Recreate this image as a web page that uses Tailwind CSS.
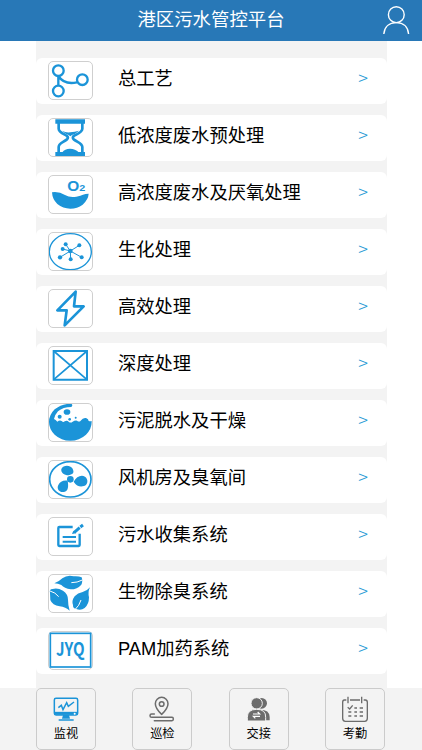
<!DOCTYPE html>
<html lang="zh-CN">
<head>
    <meta charset="UTF-8">
    <meta name="viewport" content="width=device-width, initial-scale=1.0">
    <title>港区污水管控平台</title>
    <script src="https://cdn.jsdelivr.net/npm/@tailwindcss/browser@4"></script>
</head>
<body class="bg-white text-black font-['Liberation_Sans','Noto_Sans_CJK_SC',sans-serif]">
    <div class="flex flex-col h-[750px] overflow-hidden">
        <!-- Header -->
        <header class="h-[41px] shrink-0 bg-[#2878b7] flex items-center">
            <div class="w-[41px]"></div>
            <h1 class="flex-1 text-center text-[18.4px] leading-[26px] text-white pb-px">港区污水管控平台</h1>
            <svg class="w-[41px] h-[41px]" viewBox="381 0 41 41" fill="none" stroke="#fff" stroke-width="1.4">
                <circle cx="396.3" cy="14.7" r="7.9"/>
                <path d="M383.8 34 C384.5 26.5 389.5 22.6 396.3 22.6 S408 26.5 408.6 34"/>
            </svg>
        </header>

        <!-- Menu list -->
        <main class="ml-9 w-[351px] h-[647px] shrink-0 bg-[#f3f3f3] pt-[17px] flex flex-col gap-[11px]">
            <a class="h-[46px] shrink-0 bg-white rounded-md flex items-start pl-3 pt-[3px]">
                <span class="w-[45px] h-[39px] border border-[#cfcfcf] rounded-[5px]">
                    <svg class="w-[43px] h-[37px]" viewBox="3 3 129 111" fill="none" stroke="#1b94d8" stroke-width="7">
                        <circle cx="31" cy="29" r="16"/><circle cx="31" cy="90" r="16"/><circle cx="103" cy="56" r="16"/>
                        <path d="M31 45V74M31 45C42 62 60 70 87 64"/>
                    </svg>
                </span>
                <span class="ml-[25px] text-[18.3px] leading-[26px] mt-[5px]">总工艺</span>
                <span class="ml-auto mr-[19px] mt-[3px] font-['Noto_Sans_CJK_SC',sans-serif] font-light text-[18px] leading-[26px] text-[#2a9bd5]">&gt;</span>
            </a>
            <a class="h-[46px] shrink-0 bg-white rounded-md flex items-start pl-3 pt-[3px]">
                <span class="w-[45px] h-[39px] border border-[#cfcfcf] rounded-[5px]">
                    <svg class="w-[43px] h-[37px]" viewBox="3 3 129 111" fill="#1b94d8">
                        <path d="M22 4H111V17H22ZM22 102H111V115H22Z"/>
                        <path d="M32 15V32C32 42 44 46 57 54Q62 59 57 64C44 74 32 76 32 87V104M103 15V32C103 42 91 46 77 54Q72 59 77 64C91 74 103 76 103 87V104" fill="none" stroke="#1b94d8" stroke-width="8"/>
                        <path d="M42 38Q54 45 67 43T93 38Q81 49 72 51L67 55L62 51Q53 48 42 38ZM43 103Q50 92 66 92T92 103Z"/>
                    </svg>
                </span>
                <span class="ml-[25px] text-[18.3px] leading-[26px] mt-[5px]">低浓度废水预处理</span>
                <span class="ml-auto mr-[19px] mt-[3px] font-['Noto_Sans_CJK_SC',sans-serif] font-light text-[18px] leading-[26px] text-[#2a9bd5]">&gt;</span>
            </a>
            <a class="h-[46px] shrink-0 bg-white rounded-md flex items-start pl-3 pt-[3px]">
                <span class="w-[45px] h-[39px] border border-[#cfcfcf] rounded-[5px]">
                    <svg class="w-[43px] h-[37px]" viewBox="3 3 129 111" fill="#1b94d8">
                        <path d="M12 52Q33 49 51 60Q66 69 85 65Q99 62 105 59Q112 56 122 56Q121 73 104 89Q88 101 67 101Q45 101 28 87Q13 73 12 52Z"/>
                        <text x="58" y="47" font-size="42" font-weight="bold" font-family="Liberation Sans" textLength="36" lengthAdjust="spacingAndGlyphs">O</text>
                        <text x="94" y="47" font-size="25" font-weight="bold" font-family="Liberation Sans" textLength="18" lengthAdjust="spacingAndGlyphs">2</text>
                    </svg>
                </span>
                <span class="ml-[25px] text-[18.3px] leading-[26px] mt-[5px]">高浓度废水及厌氧处理</span>
                <span class="ml-auto mr-[19px] mt-[3px] font-['Noto_Sans_CJK_SC',sans-serif] font-light text-[18px] leading-[26px] text-[#2a9bd5]">&gt;</span>
            </a>
            <a class="h-[46px] shrink-0 bg-white rounded-md flex items-start pl-3 pt-[3px]">
                <span class="w-[45px] h-[39px] border border-[#cfcfcf] rounded-[5px]">
                    <svg class="w-[43px] h-[37px]" viewBox="3 3 129 111" fill="#1b94d8">
                        <ellipse cx="67" cy="59" rx="63" ry="54" fill="none" stroke="#1b94d8" stroke-width="4"/>
                        <path d="M67 57L53 37M67 57L94 40M67 57L44 51M67 57L36 76M67 57L68 82M67 57L101 76" stroke="#1b94d8" stroke-width="3"/>
                        <circle cx="67" cy="57" r="7"/><circle cx="53" cy="37" r="6"/><circle cx="94" cy="40" r="6"/><circle cx="44" cy="51" r="6"/><circle cx="36" cy="76" r="6.500"/><circle cx="68" cy="82" r="6"/><circle cx="101" cy="76" r="6"/>
                    </svg>
                </span>
                <span class="ml-[25px] text-[18.3px] leading-[26px] mt-[5px]">生化处理</span>
                <span class="ml-auto mr-[19px] mt-[3px] font-['Noto_Sans_CJK_SC',sans-serif] font-light text-[18px] leading-[26px] text-[#2a9bd5]">&gt;</span>
            </a>
            <a class="h-[46px] shrink-0 bg-white rounded-md flex items-start pl-3 pt-[3px]">
                <span class="w-[45px] h-[39px] border border-[#cfcfcf] rounded-[5px]">
                    <svg class="w-[43px] h-[37px]" viewBox="3 3 129 111" fill="none" stroke="#1b94d8" stroke-width="8" stroke-linejoin="round">
                        <path d="M83 8L28 64H56L50 109L107 52H78Z"/>
                    </svg>
                </span>
                <span class="ml-[25px] text-[18.3px] leading-[26px] mt-[5px]">高效处理</span>
                <span class="ml-auto mr-[19px] mt-[3px] font-['Noto_Sans_CJK_SC',sans-serif] font-light text-[18px] leading-[26px] text-[#2a9bd5]">&gt;</span>
            </a>
            <a class="h-[46px] shrink-0 bg-white rounded-md flex items-start pl-3 pt-[3px]">
                <span class="w-[45px] h-[39px] border border-[#cfcfcf] rounded-[5px]">
                    <svg class="w-[43px] h-[37px]" viewBox="3 3 129 111" fill="none" stroke="#1b94d8">
                        <path d="M17 15H117V101H17Z" stroke-width="6"/>
                        <path d="M17 15L117 101M117 15L17 101" stroke-width="5"/>
                    </svg>
                </span>
                <span class="ml-[25px] text-[18.3px] leading-[26px] mt-[5px]">深度处理</span>
                <span class="ml-auto mr-[19px] mt-[3px] font-['Noto_Sans_CJK_SC',sans-serif] font-light text-[18px] leading-[26px] text-[#2a9bd5]">&gt;</span>
            </a>
            <a class="h-[46px] shrink-0 bg-white rounded-md flex items-start pl-3 pt-[3px]">
                <span class="w-[45px] h-[39px] border border-[#cfcfcf] rounded-[5px]">
                    <svg class="w-[43px] h-[37px]" viewBox="3 3 129 111" fill="#1b94d8">
                        <path d="M70 2Q76 7 70 12Q45 12 30 25Q20 36 18 48Q23 50 28 56Q35 50 41 54Q46 60 50 55Q57 51 62 56Q68 61 74 56Q80 52 87 53Q94 58 98 53Q105 43 114 45Q122 48 122 54Q128 56 131 54Q132 78 114 95Q94 113 67 113Q40 113 20 95Q3 78 3 57Q3 36 20 19Q42 2 70 2Z"/>
                        <ellipse cx="57" cy="27" rx="10" ry="8.500"/><circle cx="35" cy="41" r="6"/><circle cx="65" cy="49" r="4"/><circle cx="83" cy="44" r="3"/>
                    </svg>
                </span>
                <span class="ml-[25px] text-[18.3px] leading-[26px] mt-[5px]">污泥脱水及干燥</span>
                <span class="ml-auto mr-[19px] mt-[3px] font-['Noto_Sans_CJK_SC',sans-serif] font-light text-[18px] leading-[26px] text-[#2a9bd5]">&gt;</span>
            </a>
            <a class="h-[46px] shrink-0 bg-white rounded-md flex items-start pl-3 pt-[3px]">
                <span class="w-[45px] h-[39px] border border-[#cfcfcf] rounded-[5px]">
                    <svg class="w-[43px] h-[37px]" viewBox="3 3 129 111" fill="#1b94d8">
                        <ellipse cx="67" cy="58" rx="62" ry="53" fill="none" stroke="#1b94d8" stroke-width="5"/>
                        <circle cx="67" cy="58" r="10"/>
                        <path d="M62 46C48 46 38 38 40 27C46 14 66 14 73 25C80 37 76 43 62 46ZM59 62C62 80 61 93 48 96C34 98 25 87 31 75C36 65 45 60 59 62ZM77 65C85 51 99 43 111 50C122 58 120 74 108 78C96 82 86 78 77 65Z"/>
                    </svg>
                </span>
                <span class="ml-[25px] text-[18.3px] leading-[26px] mt-[5px]">风机房及臭氧间</span>
                <span class="ml-auto mr-[19px] mt-[3px] font-['Noto_Sans_CJK_SC',sans-serif] font-light text-[18px] leading-[26px] text-[#2a9bd5]">&gt;</span>
            </a>
            <a class="h-[46px] shrink-0 bg-white rounded-md flex items-start pl-3 pt-[3px]">
                <span class="w-[45px] h-[39px] border border-[#cfcfcf] rounded-[5px]">
                    <svg class="w-[43px] h-[37px]" viewBox="3 3 129 111" fill="none" stroke="#1b94d8" stroke-width="7" stroke-linejoin="round">
                        <path d="M74 30H34Q31 30 31 33V84Q31 87 34 87H92Q95 87 95 84V50"/>
                        <path d="M44 60H84M44 74H84" stroke-width="6"/>
                        <path d="M79 46L95 32M97 30L105 24" stroke-width="9"/>
                        <path d="M72 51L76 41L84 49Z" fill="#1b94d8" stroke="none"/>
                    </svg>
                </span>
                <span class="ml-[25px] text-[18.3px] leading-[26px] mt-[5px]">污水收集系统</span>
                <span class="ml-auto mr-[19px] mt-[3px] font-['Noto_Sans_CJK_SC',sans-serif] font-light text-[18px] leading-[26px] text-[#2a9bd5]">&gt;</span>
            </a>
            <a class="h-[46px] shrink-0 bg-white rounded-md flex items-start pl-3 pt-[3px]">
                <span class="w-[45px] h-[39px] border border-[#cfcfcf] rounded-[5px]">
                    <svg class="w-[43px] h-[37px]" viewBox="3 3 129 111" fill="#1b94d8">
                        <path d="M19 28Q34 22 43 13Q58 2 77 7Q92 6 101 10Q105 22 100 32Q88 46 68 46Q49 43 40 33Q30 29 19 28Z"/>
                        <path d="M6 56Q3 46 14 45Q29 41 45 50Q60 60 60 77Q60 94 65 110Q53 99 35 97Q13 94 7 78Z"/>
                        <path d="M126 40Q119 54 123 70Q123 91 110 102Q99 110 85 105Q74 104 75 93Q70 81 80 67Q89 57 104 54Q118 50 126 40Z"/>
                        <path d="M103 18Q88 26 70 26M6 51Q22 55 32 68M81 107Q94 95 99 78" fill="none" stroke="#fff" stroke-width="3"/>
                    </svg>
                </span>
                <span class="ml-[25px] text-[18.3px] leading-[26px] mt-[5px]">生物除臭系统</span>
                <span class="ml-auto mr-[19px] mt-[3px] font-['Noto_Sans_CJK_SC',sans-serif] font-light text-[18px] leading-[26px] text-[#2a9bd5]">&gt;</span>
            </a>
            <a class="h-[46px] shrink-0 bg-white rounded-md flex items-start pl-3 pt-[3px]">
                <span class="w-[45px] h-[39px] border border-[#cfcfcf] rounded-[5px]">
                    <svg class="w-[43px] h-[37px]" viewBox="3 3 129 111" fill="#1b94d8">
                        <rect x="7" y="7" width="121" height="101" fill="none" stroke="#1b94d8" stroke-width="5"/>
                        <text x="24" y="74" font-size="56" font-weight="bold" font-family="Noto Sans CJK SC" textLength="86" lengthAdjust="spacingAndGlyphs">JYQ</text>
                    </svg>
                </span>
                <span class="ml-[25px] text-[18.3px] leading-[26px] mt-[5px]">PAM加药系统</span>
                <span class="ml-auto mr-[19px] mt-[3px] font-['Noto_Sans_CJK_SC',sans-serif] font-light text-[18px] leading-[26px] text-[#2a9bd5]">&gt;</span>
            </a>
        </main>

        <!-- Bottom tabs -->
        <nav class="h-[62px] shrink-0 bg-[#f3f3f3] flex justify-between pl-9 pr-[37px]">
            <a class="w-[60px] h-[62px] border border-[#cbcbcb] rounded-[5px] flex flex-col items-center">
                <svg class="w-[58px] h-[34px]" viewBox="111 60 174 102" fill="none" stroke="#1b94d8" stroke-width="4.500">
                    <rect x="163" y="88" width="70" height="50" rx="5"/>
                    <path d="M163 133H233" stroke-width="9"/>
                    <path d="M175 116L184 109L189 122L200 101L205 112L222 99"/>
                    <path d="M189 138L186 149H210L207 138Z" fill="#1b94d8" stroke="none"/>
                    <path d="M176 153H221"/>
                    <circle cx="224" cy="134" r="3" fill="#fff" stroke="none"/>
                </svg>
                <span class="text-[12.2px] leading-[18px] mt-[2px]">监视</span>
            </a>
            <a class="w-[60px] h-[62px] border border-[#cbcbcb] rounded-[5px] flex flex-col items-center">
                <svg class="w-[58px] h-[34px]" viewBox="402 60 174 102" fill="none" stroke="#6c6c6c" stroke-width="4.500" stroke-linecap="round">
                    <path d="M488 136Q469 118 469 104A19 19 0 0 1 507 104Q507 118 488 136Z"/>
                    <circle cx="488" cy="105" r="7"/>
                    <path d="M466 135H458Q453 135 453 140T458 145H519Q523 145 523 150T519 155H466"/>
                </svg>
                <span class="text-[12.2px] leading-[18px] mt-[2px]">巡检</span>
            </a>
            <a class="w-[60px] h-[62px] border border-[#cbcbcb] rounded-[5px] flex flex-col items-center">
                <svg class="w-[58px] h-[34px]" viewBox="58 60 174 102" fill="#6c6c6c">
                    <circle cx="153" cy="103" r="16"/><path d="M148 122Q177 122 177 144V154H148Z"/>
                    <circle cx="138" cy="103" r="17" stroke="#f3f3f3" stroke-width="3"/>
                    <path d="M110 156V145Q110 121 138 121T165 145V156Z" stroke="#f3f3f3" stroke-width="3"/>
                    <path d="M127 135H147L141 129M148 142H128L134 148" fill="none" stroke="#fff" stroke-width="3.500"/>
                </svg>
                <span class="text-[12.2px] leading-[18px] mt-[2px]">交接</span>
            </a>
            <a class="w-[60px] h-[62px] border border-[#cbcbcb] rounded-[5px] flex flex-col items-center">
                <svg class="w-[58px] h-[34px]" viewBox="345 60 174 102" fill="none" stroke="#6c6c6c" stroke-width="4">
                    <path d="M406 93H400Q395 93 395 100V148Q395 157 403 157H461Q469 157 469 148V100Q469 93 463 93H458M417 93H447M411 83V103M452 83V103"/>
                    <path d="M410 115L416 120L425 109"/>
                    <path d="M430 117H438M446 117H456M412 129H421M430 129H438M446 129H456M412 141H421M430 141H438M446 141H456" stroke-width="4"/>
                </svg>
                <span class="text-[12.2px] leading-[18px] mt-[2px]">考勤</span>
            </a>
        </nav>
    </div>
</body>
</html>
